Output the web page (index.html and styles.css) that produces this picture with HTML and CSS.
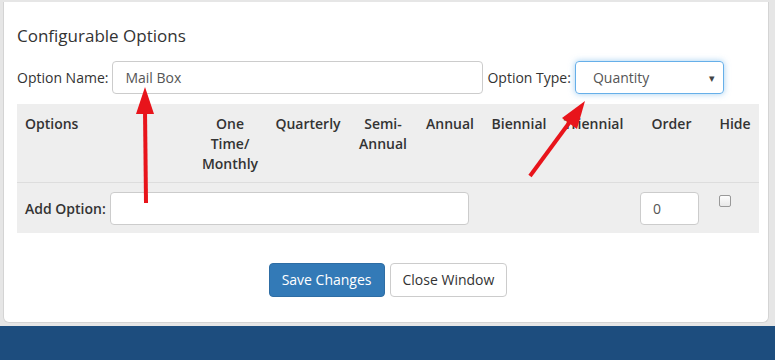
FILE: index.html
```html
<!DOCTYPE html>
<html lang="en">
  <head>
    <meta charset="UTF-8" />
    <title>Configurable Options</title>
    <link rel="stylesheet" href="styles.css">
  </head>
  <body>
    <!-- the popup window -->
    <div class="panel">
      <h3 class="title">Configurable Options</h3>
      <!-- option name and type -->
      <div class="option-row">
        <label class="field-label">Option Name:</label>
        <div class="text-input name-input">Mail Box</div>
        <label class="field-label">Option Type:</label>
        <div class="select-input">
          <span>Quantity</span>
          <span class="caret">&#9662;</span>
        </div>
      </div>
      <!-- the pricing table -->
      <div class="options-table">
        <div class="head-row">
          <div class="cell left">Options</div>
          <div class="cell">One Time/ Monthly</div>
          <div class="cell">Quarterly</div>
          <div class="cell">Semi-Annual</div>
          <div class="cell">Annual</div>
          <div class="cell">Biennial</div>
          <div class="cell">Triennial</div>
          <div class="cell">Order</div>
          <div class="cell">Hide</div>
        </div>
        <div class="body-row">
          <div class="add-cell">
            <span class="add-label">Add Option:</span>
            <div class="text-input add-input"></div>
          </div>
          <div class="order-cell">
            <div class="text-input order-input">0</div>
          </div>
          <div class="hide-cell">
            <span class="checkbox"></span>
          </div>
        </div>
      </div>
      <!-- buttons -->
      <div class="buttons">
        <button class="btn btn-primary">Save Changes</button>
        <button class="btn btn-default">Close Window</button>
      </div>
    </div>
    <div class="footer-band"></div>
    <!-- red annotation arrows -->
    <svg class="arrows" width="775" height="360" viewBox="0 0 775 360">
      <line x1="146" y1="203" x2="145" y2="110" stroke="#e8141b" stroke-width="4" />
      <polygon points="145,87 136,114 154,114" fill="#e8141b" />
      <line x1="530" y1="176" x2="572" y2="119" stroke="#e8141b" stroke-width="4" />
      <polygon points="585,101 562,118 577,129" fill="#e8141b" />
    </svg>
  </body>
</html>
```

FILE: styles.css
```css
/* reset */
* {
  margin: 0;
  padding: 0;
  box-sizing: border-box;
}
body {
  background-color: #e6e6e6;
  font-family: "Open Sans", "Liberation Sans", sans-serif;
  font-size: 14px;
  color: #333;
  width: 775px;
  height: 360px;
  overflow: hidden;
  position: relative;
}
/* the white window */
.panel {
  background-color: #fff;
  margin: 2px 6px 0 3px;
  height: 321px;
  border: 1px solid #d4d4d4;
  border-top: none;
  border-radius: 0 0 6px 6px;
  padding: 0 9px 0 13px;
}
.title {
  font-size: 17px;
  font-weight: 400;
  line-height: 24px;
  padding-top: 22px;
  color: #333;
}
/* option name row */
.option-row {
  display: flex;
  align-items: center;
  gap: 4px;
  margin-top: 13px;
}
.field-label {
  color: #333;
}
.text-input {
  height: 33px;
  border: 1px solid #ccc;
  border-radius: 4px;
  background: #fff;
  color: #555;
  padding: 6px 12px;
  line-height: 20px;
}
.name-input {
  width: 371px;
}
.select-input {
  width: 149px;
  height: 33px;
  border: 1px solid #66afe9;
  border-radius: 4px;
  box-shadow: 0 0 6px rgba(102, 175, 233, 0.6);
  display: flex;
  justify-content: space-between;
  align-items: center;
  padding: 0 8px 0 17px;
  color: #555;
}
.caret {
  font-size: 11px;
  color: #444;
}
/* table */
.options-table {
  background-color: #eee;
  margin-top: 10px;
}
.head-row,
.body-row {
  display: grid;
  grid-template-columns: 176px 74px 82px 68px 66px 72px 77px 79px 48px;
}
.head-row {
  border-bottom: 1px solid #ddd;
}
.cell {
  padding: 10px 8px 8px;
  line-height: 20px;
  font-weight: 600;
  text-align: center;
  color: #333;
}
.cell.left {
  text-align: left;
}
.body-row {
  height: 50px;
}
.add-cell {
  grid-column: 1 / 6;
  display: flex;
  align-items: center;
  gap: 4px;
  padding-left: 8px;
}
.add-label {
  font-weight: 600;
}
.add-input {
  width: 359px;
  height: 33px;
}
.order-cell {
  grid-column: 8;
  display: flex;
  align-items: center;
  padding-left: 8px;
}
.order-input {
  width: 59px;
  height: 33px;
  padding: 6px 12px;
}
.hide-cell {
  grid-column: 9;
  padding: 12px 8px;
}
.checkbox {
  display: block;
  width: 12px;
  height: 12px;
  border: 1px solid #999;
  border-radius: 2px;
  background: linear-gradient(#fdfdfd, #e8e8e8);
}
/* buttons */
.buttons {
  display: flex;
  justify-content: center;
  gap: 5px;
  margin-top: 30px;
}
.btn {
  font-family: inherit;
  font-size: 14px;
  height: 34px;
  padding: 6px 12px;
  border-radius: 4px;
  border: 1px solid transparent;
  line-height: 20px;
}
.btn-primary {
  background-color: #337ab7;
  border-color: #2e6da4;
  color: #fff;
}
.btn-default {
  background-color: #fff;
  border-color: #ccc;
  color: #333;
}
/* dark band at the bottom */
.footer-band {
  background-color: #1d4d7e;
  height: 34px;
  margin-top: 3px;
}
/* annotation overlay */
.arrows {
  position: absolute;
  left: 0;
  top: 0;
}
```
